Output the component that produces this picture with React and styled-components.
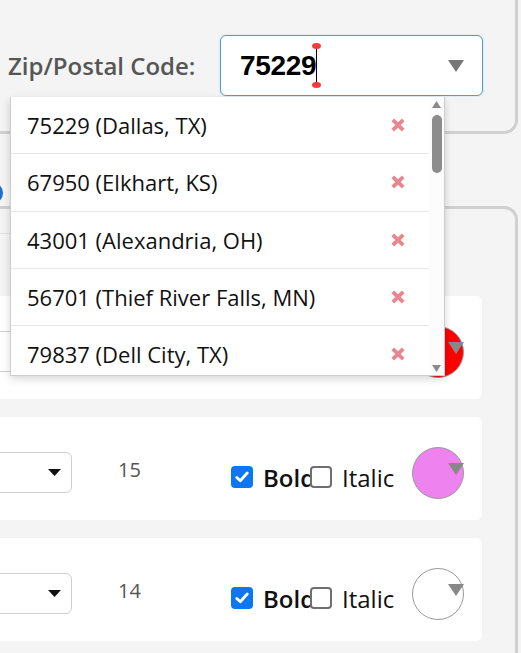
import React from "react";
import styled, { createGlobalStyle } from "styled-components";

const GlobalStyle = createGlobalStyle`
  html, body { margin: 0; padding: 0; }
  body {
    background: #f4f4f4;
    overflow: hidden;
    font-family: "Open Sans", "Noto Sans", sans-serif;
  }
  * { box-sizing: border-box; }
`;

const Page = styled.div`
  width: 521px;
  height: 653px;
  overflow: hidden;
  background: #f4f4f4;
`;

const TopPanel = styled.section`
  margin: -20px 3px 0 -20px;
  height: 154px;
  border: 3px solid #d0d0d0;
  border-top-color: transparent;
  border-radius: 0 0 14px 0;
  background: #f4f4f4;
  padding: 52px 0 0 25px;
  position: relative;
  z-index: 5;
`;

const FieldRow = styled.div`
  display: flex;
  align-items: center;
  height: 61px;
`;

const FieldLabel = styled.label`
  flex: 0 0 212px;
  font-size: 24px;
  font-weight: 600;
  color: #565656;
  white-space: nowrap;
`;

const ComboBox = styled.div`
  position: relative;
  width: 263px;
  height: 61px;
  border: 1px solid #4a9ee2;
  border-radius: 6px;
  background: #fff;
  box-shadow: 0 0 2px rgba(74, 158, 226, 0.35);
  display: flex;
  align-items: center;
  padding: 0 18px 0 19px;
`;

const ComboValue = styled.span`
  font-family: "Liberation Sans", Arial, sans-serif;
  font-weight: 700;
  font-size: 28px;
  color: #000;
  letter-spacing: -0.3px;
`;

const TextCaret = styled.span`
  position: relative;
  display: inline-block;
  width: 1px;
  height: 39px;
  background: #000;
  &::before,
  &::after {
    content: "";
    position: absolute;
    left: -4px;
    width: 9px;
    height: 6px;
    border-radius: 50%;
    background: #f43a3a;
  }
  &::before { top: -3px; }
  &::after { bottom: -3px; }
`;

const ComboArrow = styled.svg`
  margin-left: auto;
  width: 16px;
  height: 12px;
`;

const Dropdown = styled.div`
  position: absolute;
  top: 61px;
  left: -211px;
  width: 435px;
  height: 279px;
  background: #fff;
  border: 1px solid #cdcdcd;
  border-top: none;
  box-shadow: 0 3px 8px rgba(0, 0, 0, 0.16);
  display: flex;
  overflow: hidden;
  z-index: 10;
`;

const OptionList = styled.ul`
  list-style: none;
  margin: 0;
  padding: 0;
  flex: 1;
  overflow: hidden;
`;

const OptionItem = styled.li`
  height: 57.3px;
  display: flex;
  align-items: center;
  justify-content: space-between;
  padding: 0 24px 0 16px;
  border-bottom: 1px solid #e8e8e8;
  font-size: 22px;
  color: #111;
  white-space: nowrap;
`;

const RemoveIcon = styled.svg`
  width: 14px;
  height: 14px;
  flex: none;
`;

const ScrollTrack = styled.div`
  width: 15px;
  background: #fcfcfc;
  display: flex;
  flex-direction: column;
  align-items: center;
  padding: 4px 0 3px;
`;

const ScrollArrow = styled.svg`
  width: 9px;
  height: 7px;
  flex: none;
`;

const ScrollThumb = styled.div`
  margin-top: 7px;
  width: 10px;
  height: 58px;
  border-radius: 5px;
  background: #8c8c8c;
`;

const ScrollSpacer = styled.div`
  flex: 1;
`;

const OptionRow = styled.div`
  height: 72px;
  display: flex;
  align-items: flex-end;
  padding-bottom: 2px;
  margin-left: -19px;
`;

const Radio = styled.span`
  width: 22px;
  height: 22px;
  border-radius: 50%;
  border: 3px solid #1a6fd0;
  background: #fff;
`;

const StylePanel = styled.section`
  margin: 0 3px 0 -30px;
  height: 460px;
  border: 3px solid #d0d0d0;
  border-bottom: none;
  border-radius: 0 14px 0 0;
  background: #f4f4f4;
`;

const TabBar = styled.div`
  width: 250px;
  height: 25px;
  border-bottom: 1px solid #e0e0e0;
`;

const RowList = styled.div`
  padding-top: 62px;
  margin-right: 33px;
  display: flex;
  flex-direction: column;
  gap: 18px;
`;

const StyleRow = styled.div`
  height: 103px;
  background: #fff;
  border-radius: 6px;
  display: flex;
  align-items: center;
  padding: 8px 18px 0 0;
`;

const FontSelect = styled.div`
  width: 99px;
  height: 41px;
  border: 1px solid #cfcfcf;
  border-radius: 6px;
  background: #fff;
  display: flex;
  align-items: center;
  justify-content: flex-end;
  padding-right: 10px;
  flex: none;
`;

const SelectCaret = styled.svg`
  width: 13px;
  height: 7px;
`;

const SizeValue = styled.span`
  margin-left: 46px;
  width: 113px;
  margin-bottom: 7px;
  font-size: 20px;
  color: #555;
  flex: none;
`;

const StyleGroup = styled.div`
  display: flex;
  align-items: center;
  margin-top: 9px;
`;

const CheckBox = styled.span`
  position: relative;
  z-index: 1;
  width: 22px;
  height: 22px;
  flex: none;
  border-radius: 4px;
  display: flex;
  align-items: center;
  justify-content: center;
  background: ${(p) => (p.$checked ? "#0d77f2" : "#fff")};
  border: ${(p) => (p.$checked ? "none" : "2px solid #6f6f6f")};
`;

const CheckLabel = styled.span`
  margin-left: 10px;
  width: ${(p) => (p.$width ? `${p.$width}px` : "auto")};
  font-size: 24px;
  font-weight: ${(p) => (p.$bold ? 600 : 400)};
  color: #111;
  white-space: nowrap;
`;

const ColorSwatch = styled.div`
  position: relative;
  margin-left: auto;
  width: 52px;
  height: 52px;
  border-radius: 50%;
  border: 1px solid #9a9a9a;
  background: ${(p) => p.$color};
  flex: none;
`;

const SwatchArrow = styled.svg`
  position: absolute;
  right: -1px;
  top: 15px;
  width: 16px;
  height: 12px;
`;

const zips = [
  "75229 (Dallas, TX)",
  "67950 (Elkhart, KS)",
  "43001 (Alexandria, OH)",
  "56701 (Thief River Falls, MN)",
  "79837 (Dell City, TX)",
];

const rows = [
  { size: 16, color: "#ff0000" },
  { size: 15, color: "#ee82ee" },
  { size: 14, color: "#ffffff" },
];

function Cross() {
  return (
    <RemoveIcon viewBox="0 0 14 14">
      <path d="M1.8 1.8 L12.2 12.2 M12.2 1.8 L1.8 12.2" stroke="#ea8690" strokeWidth="3.8" />
    </RemoveIcon>
  );
}

function Check() {
  return (
    <svg width="14" height="12" viewBox="0 0 14 12">
      <path d="M1.8 6.4 L5.3 9.8 L12.2 2" fill="none" stroke="#fff" strokeWidth="2.8" strokeLinecap="round" strokeLinejoin="round" />
    </svg>
  );
}

export default function App() {
  return (
    <Page>
      <GlobalStyle />
      <TopPanel>
        <FieldRow>
          <FieldLabel>Zip/Postal Code:</FieldLabel>
          <ComboBox>
            <ComboValue>75229</ComboValue>
            <TextCaret />
            <ComboArrow viewBox="0 0 16 12">
              <path d="M0 0 H16 L8 12 Z" fill="#777" />
            </ComboArrow>
            <Dropdown>
              <OptionList>
                {zips.map((z) => (
                  <OptionItem key={z}>
                    <span>{z}</span>
                    <Cross />
                  </OptionItem>
                ))}
              </OptionList>
              <ScrollTrack>
                <ScrollArrow viewBox="0 0 9 7">
                  <path d="M0 7 L4.5 0 L9 7 Z" fill="#8a8a8a" />
                </ScrollArrow>
                <ScrollThumb />
                <ScrollSpacer />
                <ScrollArrow viewBox="0 0 9 7">
                  <path d="M0 0 L9 0 L4.5 7 Z" fill="#8a8a8a" />
                </ScrollArrow>
              </ScrollTrack>
            </Dropdown>
          </ComboBox>
        </FieldRow>
      </TopPanel>
      <OptionRow>
        <Radio />
      </OptionRow>
      <StylePanel>
        <TabBar />
        <RowList>
          {rows.map((r) => (
            <StyleRow key={r.size}>
              <FontSelect>
                <SelectCaret viewBox="0 0 13 7">
                  <path d="M0 0 H13 L6.5 7 Z" fill="#111" />
                </SelectCaret>
              </FontSelect>
              <SizeValue>{r.size}</SizeValue>
              <StyleGroup>
                <CheckBox $checked>
                  <Check />
                </CheckBox>
                <CheckLabel $bold $width={47}>Bold</CheckLabel>
                <CheckBox />
                <CheckLabel>Italic</CheckLabel>
              </StyleGroup>
              <ColorSwatch $color={r.color}>
                <SwatchArrow viewBox="0 0 16 12">
                  <path d="M0 0 H16 L8 12 Z" fill="#888" />
                </SwatchArrow>
              </ColorSwatch>
            </StyleRow>
          ))}
        </RowList>
      </StylePanel>
    </Page>
  );
}
